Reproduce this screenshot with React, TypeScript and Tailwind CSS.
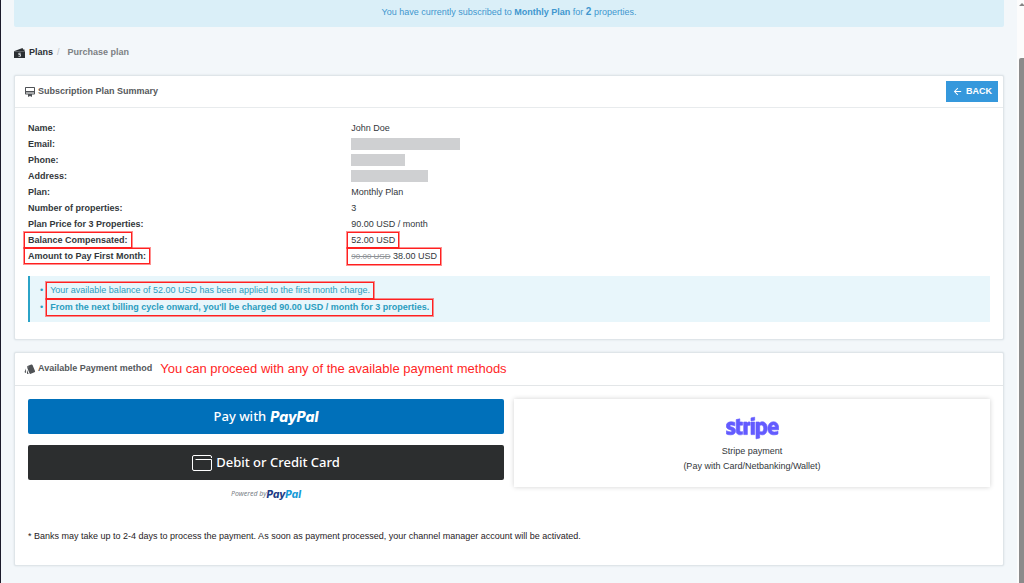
import type { ReactNode } from "react";
import { FaStripe } from "react-icons/fa";
import { MdArrowBack, MdCardMembership, MdStyle } from "react-icons/md";

function Marked({ children }: { children: ReactNode }) {
  return (
    <span className="relative inline-block">
      {children}
      <span className="pointer-events-none absolute -inset-x-1 inset-y-0 border border-[#ff2020] ring-1 ring-[#ff2020]/50" />
    </span>
  );
}

function Redacted({ className }: { className: string }) {
  return <span className={`block h-3 bg-[#cfd0d2] ${className}`} />;
}

function Row({ label, marked, children }: { label: string; marked?: boolean; children: ReactNode }) {
  return (
    <>
      <dt className="font-bold">{marked ? <Marked>{label}</Marked> : label}</dt>
      <dd className="flex items-center">{children}</dd>
    </>
  );
}

function MoneyIcon() {
  return (
    <svg viewBox="0 0 22 20" className="h-[10px] w-[11px]" aria-hidden="true">
      <path d="M1 6 17 0l1.500 3H21v3z" fill="#2b2f33" />
      <path d="M0 6.500h22V20H0z" fill="#2b2f33" />
      <path d="M13.500 10.500H9.500v2.500h3.500v3.500H9" fill="none" stroke="#f3f7fa" strokeWidth="1.600" />
    </svg>
  );
}

function PayPalMark({ className, first, second }: { className: string; first: string; second: string }) {
  return (
    <span className={`font-['Inter',sans-serif] font-extrabold italic ${className}`}>
      <span className={first}>Pay</span>
      <span className={second}>Pal</span>
    </span>
  );
}

export default function App() {
  return (
    <div className="flex h-screen overflow-hidden border-l border-[#1c1b2b] bg-[#f3f7fa] font-['Liberation_Sans',sans-serif] text-[9px] text-[#33373b]">
      <main className="min-w-0 flex-1 pr-[13px] pl-[13px]">
        <div className="flex h-[27px] items-center justify-center rounded-b-xs bg-[#daeff8] pb-1 text-[#3f97cf]">
          <p>
            You have currently subscribed to <b>Monthly Plan</b> for <b className="text-[10px]">2</b> properties.
          </p>
        </div>

        <nav aria-label="Breadcrumb" className="flex h-12 items-center pt-1 font-bold">
          <MoneyIcon />
          <a href="#plans" className="ml-1 text-[#2b2f33]">Plans</a>
          <span className="ml-1 font-normal text-[#c0c4c8]">/</span>
          <span className="ml-2 text-[#7c8084]">Purchase plan</span>
        </nav>

        <section className="rounded-xs border border-[#dfe5e9] bg-white shadow-[0_0_2px_#d3dbe0]">
          <header className="flex h-8 items-center border-b border-[#e8ebed] pr-[5px] pl-[9px]">
            <MdCardMembership className="size-3 text-[#4f5256]" />
            <h2 className="ml-[2px] font-bold text-[#55585b]">Subscription Plan Summary</h2>
            <button type="button" className="ml-auto flex h-[21px] items-center gap-[3px] bg-[#3598dc] px-[6px] font-bold text-white">
              <MdArrowBack className="size-[11px]" />
              BACK
            </button>
          </header>
          <div className="px-[13px] pt-3 pb-[17px]">
            <dl className="grid grid-cols-[1fr_2fr] gap-x-1 leading-4">
              <Row label="Name:">John Doe</Row>
              <Row label="Email:"><Redacted className="w-[109px]" /></Row>
              <Row label="Phone:"><Redacted className="w-[54px]" /></Row>
              <Row label="Address:"><Redacted className="w-[77px]" /></Row>
              <Row label="Plan:">Monthly Plan</Row>
              <Row label="Number of properties:">3</Row>
              <Row label="Plan Price for 3 Properties:">90.00 USD / month</Row>
              <Row label="Balance Compensated:" marked><Marked>52.00 USD</Marked></Row>
              <Row label="Amount to Pay First Month:" marked>
                <Marked><s className="text-[8px] text-[#8d9195]">90.00 USD</s> 38.00 USD</Marked>
              </Row>
            </dl>
            <ul className="mt-[11px] flex list-none flex-col border-l-2 border-[#2ba3c7] bg-[#e8f6fb] py-[6px] pl-[10px] leading-[17px] text-[#2b9dbf]">
              <li className="flex gap-[7px]"><span>•</span><Marked>Your available balance of 52.00 USD has been applied to the first month charge.</Marked></li>
              <li className="flex gap-[7px]"><span>•</span><Marked><b>From the next billing cycle onward, you'll be charged 90.00 USD / month for 3 properties.</b></Marked></li>
            </ul>
          </div>
        </section>

        <section className="mt-3 rounded-xs border border-[#dfe5e9] bg-white shadow-[0_0_2px_#d3dbe0]">
          <header className="flex h-[33px] items-center border-b border-[#e3e6e8] pl-[9px]">
            <MdStyle className="size-3 text-[#4f5256]" />
            <h2 className="ml-[2px] font-bold text-[#55585b]">Available Payment method</h2>
            <p className="ml-2 text-[13px] text-[#ff2626]">You can proceed with any of the available payment methods</p>
          </header>
          <div className="px-[13px] pt-[13px] pb-[21px]">
            <div className="grid grid-cols-2 items-start gap-[10px]">
              <div className="flex flex-col font-['Noto_Sans',sans-serif]">
                <button type="button" className="flex h-[35px] items-center justify-center gap-1 rounded-xs bg-[#0070ba] text-[13px] font-medium text-white">
                  Pay with <PayPalMark className="text-[14px]" first="" second="" />
                </button>
                <button type="button" className="mt-[11px] flex h-[35px] items-center justify-center gap-1 rounded-xs bg-[#2c2e2f] text-[13px] font-medium text-white">
                  <svg viewBox="0 0 20 16" className="h-4 w-5" fill="none" stroke="white" aria-hidden="true">
                    <path d="M19.500 3V2a1.500 1.500 0 0 0-1.500-1.500H2A1.500 1.500 0 0 0 .5 2v12A1.500 1.500 0 0 0 2 15.500h16a1.500 1.500 0 0 0 1.500-1.500V4.500H3.500" />
                  </svg>
                  Debit or Credit Card
                </button>
                <p className="mt-2 flex h-3 items-center justify-center text-[7px] text-[#7b8388] italic">
                  Powered by
                  <PayPalMark className="text-[10px]" first="text-[#1f3c85]" second="text-[#199bd7]" />
                </p>
              </div>
              <button type="button" className="flex h-[88px] flex-col items-center bg-white pt-2 leading-[15px] shadow-[0_0_5px_#0000002e]">
                <FaStripe className="-mb-[5px] h-[42px] w-[53px] stroke-[#635bff] stroke-[8px] text-[#635bff]" aria-label="Stripe" />
                <span>Stripe payment</span>
                <span>(Pay with Card/Netbanking/Wallet)</span>
              </button>
            </div>
            <p className="mt-7 leading-4 text-[#1f2225]">
              * Banks may take up to 2-4 days to process the payment. As soon as payment processed, your channel manager account will be activated.
            </p>
          </div>
        </section>
      </main>

      <div className="flex w-[7px] flex-col bg-[#fcfcfc] pl-[2px]" aria-hidden="true">
        <svg viewBox="0 0 5 3" className="mt-[3px] h-[3px] w-[5px]">
          <path d="M0 3 3 0l2 2v1z" fill="#858585" />
        </svg>
        <div className="mt-[52px] flex-1 rounded-tl-xs bg-[#8b8b8b]" />
      </div>
    </div>
  );
}
